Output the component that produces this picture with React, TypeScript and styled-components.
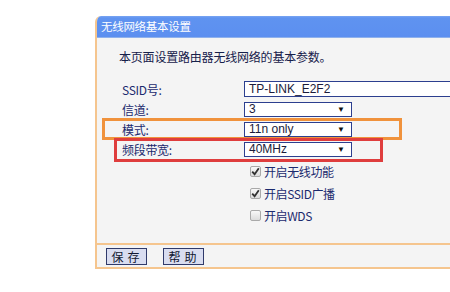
import React from 'react';
import styled, { createGlobalStyle } from 'styled-components';

const GlobalStyle = createGlobalStyle`
  html, body {
    margin: 0;
    padding: 0;
    background: #ffffff;
    overflow: hidden;
  }
  body {
    width: 450px;
    height: 292px;
    font-family: 'Noto Sans CJK SC', 'Liberation Sans', sans-serif;
  }
`;

const Page = styled.div`
  padding: 16px 0 0 95px;
  width: 450px;
  height: 292px;
  box-sizing: border-box;
  overflow: hidden;
`;

const Panel = styled.div`
  width: 420px;
  background: #f4f4f4;
  border-left: 2px solid #f5c58e;
  border-bottom: 2px solid #f5c58e;
  border-top-left-radius: 6px;
  overflow: hidden;
`;

const Header = styled.div`
  height: 22px;
  background: linear-gradient(#7aa5f2 0, #5f93f0 2px, #5c8ff0 100%);
  border-bottom: 1px solid #8fb1ec;
  box-sizing: border-box;
  color: #ffffff;
  font-size: 11.5px;
  line-height: 21px;
  padding-left: 4px;
  letter-spacing: -0.3px;
`;

const Body = styled.div`
  padding: 10px 0 0 22px;
  height: 207px;
  box-sizing: border-box;
  border-bottom: 2px solid #f5c58e;
`;

const Intro = styled.div`
  font-size: 12px;
  color: #16204a;
  line-height: 18px;
  letter-spacing: -0.2px;
`;

const Form = styled.div`
  margin-top: 13px;
  display: flex;
  flex-direction: column;
`;

const Row = styled.div`
  position: relative;
  display: grid;
  grid-template-columns: 125px 1fr;
  align-items: center;
  height: 20px;
`;

const Label = styled.div`
  padding-left: 3px;
  font-size: 12px;
  color: #1b2a6e;
  letter-spacing: -0.3px;
`;

const TextInput = styled.div`
  height: 14px;
  border: 1px solid #2c3f8f;
  background: #ffffff;
  font-family: 'Liberation Sans', Arial, sans-serif;
  font-size: 12px;
  line-height: 14px;
  color: #1b1b3a;
  padding-left: 4px;
`;

const Select = styled.div`
  width: 102px;
  height: 13px;
  border: 1px solid #2c3f8f;
  background: #ffffff;
  font-family: 'Liberation Sans', Arial, sans-serif;
  font-size: 12px;
  line-height: 13px;
  color: #1b1b3a;
  padding-left: 4px;
  display: flex;
  justify-content: space-between;
  align-items: center;
`;

const Arrow = styled.span`
  font-size: 8px;
  color: #111;
  margin-right: 6px;
`;

const Highlight = styled.div<{ $color: string; $left: number; $width: number; $top: number; $bottom: number }>`
  position: absolute;
  left: ${p => p.$left}px;
  width: ${p => p.$width}px;
  top: ${p => p.$top}px;
  bottom: ${p => p.$bottom}px;
  border: 3px solid ${p => p.$color};
  box-sizing: border-box;
  pointer-events: none;
`;

const Checks = styled.div`
  margin-top: 1px;
  padding-left: 131px;
  display: flex;
  flex-direction: column;
`;

const CheckRow = styled.div`
  display: flex;
  align-items: center;
  height: 22px;
  gap: 3px;
  font-size: 12px;
  color: #1b2a6e;
  letter-spacing: -0.4px;
`;

const Box = styled.span`
  width: 11px;
  height: 11px;
  border: 1px solid #a9a9a9;
  border-radius: 2px;
  background: linear-gradient(#f8f8f8, #dcdcdc);
  display: inline-flex;
  align-items: center;
  justify-content: center;
  box-sizing: border-box;
`;

const Footer = styled.div`
  padding: 3px 0 2px 9px;
  display: flex;
  gap: 16px;
`;

const Button = styled.div`
  width: 37px;
  height: 15px;
  border: 1px solid #303a6a;
  background: #d9ddf0;
  box-sizing: content-box;
  font-size: 12px;
  line-height: 15px;
  text-align: center;
  white-space: nowrap;
  color: #121830;
  letter-spacing: 4px;
  padding-left: 2px;
`;

const Check = () => (
  <svg width="9" height="9" viewBox="0 0 9 9">
    <path d="M1.2 4.6 L3.6 7.2 L7.8 1.2" fill="none" stroke="#333" strokeWidth="1.8" />
  </svg>
);

const CheckItem: React.FC<{ checked?: boolean; label: string }> = ({ checked, label }) => (
  <CheckRow>
    <Box>{checked && <Check />}</Box>
    {label}
  </CheckRow>
);

const App: React.FC = () => {
  return (
    <Page>
      <GlobalStyle />
      <Panel>
        <Header>无线网络基本设置</Header>
        <Body>
          <Intro>本页面设置路由器无线网络的基本参数。</Intro>
          <Form>
            <Row>
              <Label>SSID号:</Label>
              <TextInput>TP-LINK_E2F2</TextInput>
            </Row>
            <Row>
              <Label>信道:</Label>
              <Select>3<Arrow>▼</Arrow></Select>
            </Row>
            <Row>
              <Label>模式:</Label>
              <Select>11n only<Arrow>▼</Arrow></Select>
              <Highlight $color="#f0923c" $left={-17} $width={300} $top={-1} $bottom={-1} />
            </Row>
            <Row>
              <Label>频段带宽:</Label>
              <Select>40MHz<Arrow>▼</Arrow></Select>
              <Highlight $color="#df3d3d" $left={-5} $width={269} $top={-1} $bottom={-3} />
            </Row>
          </Form>
          <Checks>
            <CheckItem checked label="开启无线功能" />
            <CheckItem checked label="开启SSID广播" />
            <CheckItem label="开启WDS" />
          </Checks>
        </Body>
        <Footer>
          <Button>保存</Button>
          <Button>帮助</Button>
        </Footer>
      </Panel>
    </Page>
  );
};

export default App;
